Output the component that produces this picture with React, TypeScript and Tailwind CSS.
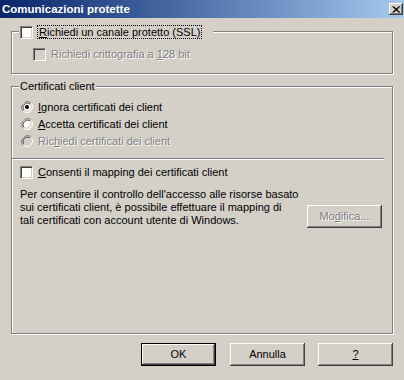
import React from "react";

function CheckBox({ disabled = false }: { disabled?: boolean }) {
  return (
    <span
      className={`block shrink-0 w-[13px] h-[13px] border border-t-[#808080] border-l-[#808080] border-b-white border-r-white shadow-[inset_1px_1px_0_#404040,inset_-1px_-1px_0_#d4d0c8] ${
        disabled ? "bg-[#d4d0c8]" : "bg-white"
      }`}
    />
  );
}

function Radio({ checked = false, disabled = false }: { checked?: boolean; disabled?: boolean }) {
  return (
    <svg width="12" height="12" viewBox="0 0 12 12" className="shrink-0">
      <circle cx="6" cy="6" r="5.5" fill="none" stroke="#fff" strokeWidth="1" />
      <path d="M10.2 1.8 A6 6 0 0 0 1.8 10.2" fill="none" stroke="#808080" />
      <circle cx="6" cy="6" r="4.5" fill={disabled ? "#d4d0c8" : "#fff"} stroke="none" />
      <path d="M9.2 2.8 A4.6 4.6 0 0 0 2.8 9.2" fill="none" stroke="#404040" />
      <path d="M2.8 9.2 A4.6 4.6 0 0 0 9.2 2.8" fill="none" stroke="#d4d0c8" />
      {checked && <circle cx="6" cy="6" r="2" fill="#000" />}
    </svg>
  );
}

function Button({
  children,
  isDefault = false,
  disabled = false,
  className = "",
}: {
  children: React.ReactNode;
  isDefault?: boolean;
  disabled?: boolean;
  className?: string;
}) {
  return (
    <div
      className={`w-[75px] h-[23px] flex items-center justify-center bg-[#d4d0c8] ${
        isDefault ? "border border-black" : ""
      } ${className}`}
    >
      <div className="w-full h-full flex items-center justify-center shadow-[inset_-1px_-1px_0_#404040,inset_1px_1px_0_#fff,inset_-2px_-2px_0_#808080]">
        <span
          className={disabled ? "text-[#808080] [text-shadow:1px_1px_0_#fff]" : "text-black"}
        >
          {children}
        </span>
      </div>
    </div>
  );
}

const groupBox =
  "relative border border-[#808080] shadow-[inset_1px_1px_0_#fff,1px_1px_0_#fff]";

export default function App() {
  return (
    <div className="w-[404px] h-[380px] bg-[#d4d0c8] font-['Liberation_Sans',Arial,sans-serif] text-[11px] leading-[13px] text-black overflow-hidden select-none">
      {/* Title bar */}
      <div className="h-[18px] flex items-center justify-between pl-[2px] pr-[1px] bg-linear-to-r from-[#0a246a] to-[#a6caf0]">
        <span className="font-bold text-white text-[11.5px]">Comunicazioni protette</span>
        <div className="w-[14px] h-[12px] flex items-center justify-center bg-[#d4d0c8] shadow-[inset_-1px_-1px_0_#404040,inset_1px_1px_0_#fff,inset_-2px_-2px_0_#808080]">
          <svg width="8" height="7" viewBox="0 0 8 7">
            <path d="M0.5 0.5 L7 6.5 M1.5 0.5 L8 6.5 M7 0.5 L0.5 6.5 M8 0.5 L1.5 6.5" stroke="#000" strokeWidth="1" />
          </svg>
        </div>
      </div>

      <div className="px-[11px]">
        {/* Group 1 */}
        <div className={`${groupBox} mt-[13px] h-[43px]`}>
          <div className="absolute left-[7px] -top-[7px] w-[194px] flex items-center bg-[#d4d0c8] pl-[1px]">
            <CheckBox />
            <span className="ml-[4px] px-[1px] h-[14px] flex items-center border border-dotted border-black">
              <span>
                <u>R</u>ichiedi un canale protetto (SSL)
              </span>
            </span>
          </div>
          <div className="flex items-center mt-[16px] ml-[21px]">
            <CheckBox disabled />
            <span className="ml-[5px] text-[#808080] [text-shadow:1px_1px_0_#fff]">
              Richiedi crittografia a <u>1</u>28 bit
            </span>
          </div>
        </div>

        {/* Group 2 */}
        <div className={`${groupBox} mt-[12px] h-[248px]`}>
          <div className="absolute left-[7px] -top-[7px] bg-[#d4d0c8] px-[1px] leading-[13px]">
            Certificati client
          </div>
          <div className="flex flex-col gap-[5px] mt-[14px] ml-[9px]">
            <div className="flex items-center h-[12px]">
              <Radio checked />
              <span className="ml-[5px]">
                <u>I</u>gnora certificati dei client
              </span>
            </div>
            <div className="flex items-center h-[12px]">
              <Radio />
              <span className="ml-[5px]">
                <u>A</u>ccetta certificati dei client
              </span>
            </div>
            <div className="flex items-center h-[12px]">
              <Radio disabled />
              <span className="ml-[5px] text-[#808080] [text-shadow:1px_1px_0_#fff]">
                Ric<u>h</u>iedi certificati dei client
              </span>
            </div>
          </div>

          {/* Separator */}
          <div className="mt-[11px] w-[372px] h-[2px] border-t border-t-[#808080] border-b border-b-white" />

          <div className="flex items-center mt-[6px] ml-[8px]">
            <CheckBox />
            <span className="ml-[5px]">
              <u>C</u>onsenti il mapping dei certificati client
            </span>
          </div>

          <div className="flex items-start mt-[9px] ml-[8px] mr-[10px]">
            <p className="whitespace-nowrap">
              Per consentire il controllo dell'accesso alle risorse basato
              <br />
              sui certificati client, è possibile effettuare il mapping di
              <br />
              tali certificati con account utente di Windows.
            </p>
            <Button disabled className="ml-auto mt-[17px]">
              Mo<u>d</u>ifica...
            </Button>
          </div>
        </div>

        {/* Dialog buttons */}
        <div className="flex justify-end mt-[9px]">
          <Button isDefault>OK</Button>
          <Button className="ml-[14px]">Annulla</Button>
          <Button className="ml-[13px]">
            <u>?</u>
          </Button>
        </div>
      </div>
    </div>
  );
}
